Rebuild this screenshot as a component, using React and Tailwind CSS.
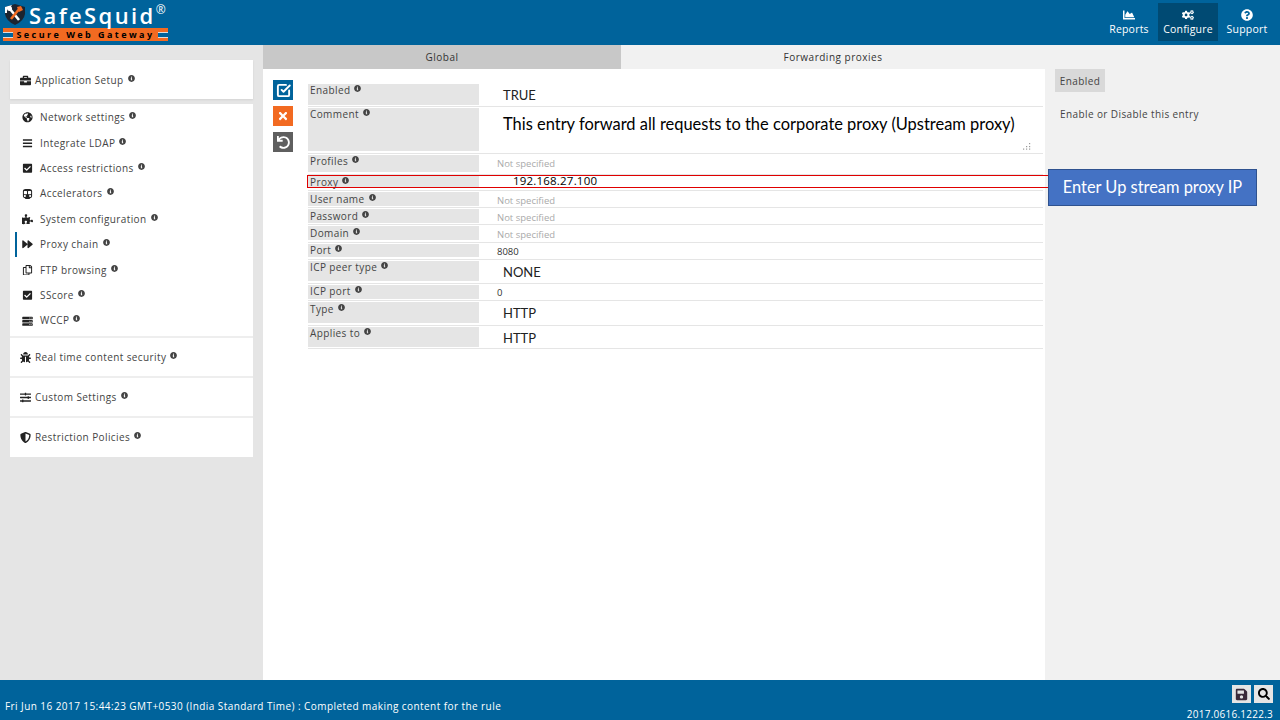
import {
  FaBars, FaBriefcase, FaBug, FaChartArea, FaCheckSquare, FaCogs, FaForward, FaGlobeAmericas,
  FaInfoCircle, FaPuzzlePiece, FaQuestionCircle, FaRegCopy, FaSave,
  FaSearch, FaServer, FaShieldAlt, FaSlidersH, FaSubway, FaTimes, FaUndo,
} from 'react-icons/fa';
import { FiCheckSquare } from 'react-icons/fi';

const ui = { fontFamily: '"Open Sans", sans-serif' };
const big = { fontFamily: 'Lato, sans-serif' };

const menuItems = [
  { label: 'Network settings', icon: FaGlobeAmericas },
  { label: 'Integrate LDAP', icon: FaBars },
  { label: 'Access restrictions', icon: FaCheckSquare },
  { label: 'Accelerators', icon: FaSubway },
  { label: 'System configuration', icon: FaPuzzlePiece },
  { label: 'Proxy chain', icon: FaForward, active: true },
  { label: 'FTP browsing', icon: FaRegCopy },
  { label: 'SScore', icon: FaCheckSquare },
  { label: 'WCCP', icon: FaServer },
];

// heights: row box plus the 1px gap under its line, grey label block inside
const rows = [
  { label: 'Enabled', value: 'TRUE', kind: 'big', h: 'h-[23px]', grey: 'h-[21px]' },
  { label: 'Comment', kind: 'comment', h: 'h-[46px]', grey: 'h-[43px]' },
  { label: 'Profiles', value: 'Not specified', kind: 'empty', h: 'h-[20px]', grey: 'h-[17px]' },
  { label: 'Proxy', value: '192.168.27.100', kind: 'proxy', h: 'h-[15px]', grey: 'h-[11px]' },
  { label: 'User name', value: 'Not specified', kind: 'empty', h: 'h-[16px]', grey: 'h-[14px] pt-[1px]' },
  { label: 'Password', value: 'Not specified', kind: 'empty', h: 'h-[16px]', grey: 'h-[14px] pt-[1px]' },
  { label: 'Domain', value: 'Not specified', kind: 'empty', h: 'h-[17px]', grey: 'h-[14px] pt-[1px]' },
  { label: 'Port', value: '8080', kind: 'plain', h: 'h-[16px]', grey: 'h-[13px]' },
  { label: 'ICP peer type', value: 'NONE', kind: 'big', h: 'h-[23px]', grey: 'h-[20px]' },
  { label: 'ICP port', value: '0', kind: 'plain', h: 'h-[16px]', grey: 'h-[14px]' },
  { label: 'Type', value: 'HTTP', kind: 'big', h: 'h-[24px]', grey: 'h-[21px] pt-[1px]' },
  { label: 'Applies to', value: 'HTTP', kind: 'big', h: 'h-[22px]', grey: 'h-[20px]' },
];

function Info({ className = '' }) {
  return <FaInfoCircle className={`inline-block text-[7px] text-[#444] align-top ml-[4px] mt-[1px] ${className}`} />;
}

function Logo() {
  return (
    <div className="w-[172px] pl-[3px] pt-[1px] shrink-0">
      <div className="flex items-start h-[27px]">
        <svg width="22" height="21" viewBox="0 0 22 21" className="ml-[1px] mt-[3px] shrink-0">
          <path d="M1 3 L11 0 L21 3 L21 10 Q20 17 11 21 Q2 17 1 10 Z" fill="#1c2430" />
          <path d="M1 3 L8 1 L6 4 L3 5 L3 9 L1 9 Z" fill="#fff" />
          <path d="M6 5 L15 16" stroke="#fff" strokeWidth="2.6" />
          <path d="M16 4 L7 15" stroke="#f26a21" strokeWidth="2.6" />
          <path d="M13 3 L17 2 L19 6 L15 8 Z" fill="#f26a21" />
          <circle cx="5.5" cy="4.5" r="2.5" fill="#fff" />
        </svg>
        <span className="text-[22px] leading-[24px] font-semibold text-white tracking-[2.4px] ml-[3px] mt-[2px]" style={ui}>
          SafeSquid
        </span>
        <span className="text-[12px] leading-[12px] text-white mt-[3px]" style={ui}>®</span>
      </div>
      <div className="flex items-center justify-between bg-[#f26a21] h-[13px] w-[165px]">
        <span className="w-[10px] border-y border-[#ddd] h-[6px] bg-[#00639b]" />
        <span className="text-[9px] leading-[13px] font-bold text-black tracking-[2.45px]" style={ui}>Secure Web Gateway</span>
        <span className="w-[10px] border-y border-[#ddd] h-[6px] bg-[#00639b]" />
      </div>
    </div>
  );
}

function TopButton({ icon: Icon, label, className }) {
  return (
    <div className={`flex flex-col items-center justify-center h-[38px] ${className}`}>
      <Icon className="text-[12px] text-white" />
      <span className="text-[10.5px] leading-[13px] text-white tracking-[0.2px] mt-[2px]">{label}</span>
    </div>
  );
}

function SectionCard({ icon: Icon, label, className }) {
  return (
    <div className={`bg-white flex items-center pl-[10px] ${className}`}>
      <Icon className="text-[11px] text-[#222] w-[11px] shrink-0" />
      <span className="text-[10px] text-[#444] tracking-[0.4px] ml-[4px]">{label}</span>
      <Info className="mb-[5px]" />
    </div>
  );
}

function Sidebar() {
  return (
    <aside className="w-[263px] shrink-0 bg-[#e5e5e5] pl-[10px] pr-[10px] pt-[15px]">
      <SectionCard icon={FaBriefcase} label="Application Setup" className="h-[39px] mb-[5px] pt-[2px] shadow-[0_1px_2px_rgba(0,0,0,0.08)]" />
      <div className="bg-white h-[234px] pt-[1px] border-b-2 border-[#eeeeee]">
        {menuItems.map((item) => (
          <div key={item.label} className="flex items-center h-[25.4px] pl-[5px]">
            <span className={`w-[2px] h-[25px] ${item.active ? 'bg-[#00639b]' : ''}`} />
            <item.icon className="text-[10.5px] text-[#222] w-[11px] ml-[5px] shrink-0" />
            <span className="text-[10px] text-[#444] tracking-[0.4px] ml-[7px]">{item.label}</span>
            <Info className="mb-[5px]" />
          </div>
        ))}
      </div>
      <SectionCard icon={FaBug} label="Real time content security" className="h-[40px] border-b-2 border-[#eeeeee]" />
      <SectionCard icon={FaSlidersH} label="Custom Settings" className="h-[40px] border-b-2 border-[#eeeeee]" />
      <SectionCard icon={FaShieldAlt} label="Restriction Policies" className="h-[39px]" />
    </aside>
  );
}

function ActionButton({ icon: Icon, className, iconClass }) {
  return (
    <div className={`w-[20px] h-[20px] flex items-center justify-center ${className}`}>
      <Icon className={`text-white ${iconClass}`} />
    </div>
  );
}

function ResizeGrip() {
  return (
    <svg width="8" height="7" viewBox="0 0 8 7" className="absolute right-[12px] bottom-[3px]" fill="#999">
      <rect x="6" y="0" width="1.2" height="1.2" />
      <rect x="3" y="3" width="1.2" height="1.2" />
      <rect x="6" y="3" width="1.2" height="1.2" />
      <rect x="0" y="5.5" width="1.2" height="1.2" />
      <rect x="3" y="5.5" width="1.2" height="1.2" />
      <rect x="6" y="5.5" width="1.2" height="1.2" />
    </svg>
  );
}

function Value({ row }) {
  if (row.kind === 'big') {
    return <div className="pl-[24px] pt-[2px] text-[13px] leading-[18px] text-[#222]" style={big}>{row.value}</div>;
  }
  if (row.kind === 'comment') {
    return (
      <div className="relative h-full pl-[24px] pt-[5px] text-[16.45px] leading-[22px] text-black" style={big}>
        This entry forward all requests to the corporate proxy (Upstream proxy)
        <ResizeGrip />
      </div>
    );
  }
  if (row.kind === 'proxy') {
    return <div className="pl-[34px] -mt-[2px] text-[11.5px] leading-[14px] text-black tracking-[0.2px]">{row.value}</div>;
  }
  if (row.kind === 'empty') {
    return <div className="pl-[18px] pt-[2px] text-[9.5px] leading-[14px] text-[#aaa]">{row.value}</div>;
  }
  return <div className="pl-[18px] pt-[1px] text-[9.5px] leading-[14px] text-[#333]">{row.value}</div>;
}

function Form() {
  return (
    <div className="relative mt-[15px] ml-[15px] w-[735px]">
      {rows.map((row) => (
        <div key={row.label} className={`flex border-b border-[#e5e5e5] mb-[1px] ${row.h}`}>
          <div className={`w-[171px] shrink-0 bg-[#e5e5e5] pl-[2px] text-[10px] leading-[13px] text-[#444] tracking-[0.4px] ${row.grey}`}>
            {row.label}
            <Info />
          </div>
          <div className="flex-1 min-w-0">
            <Value row={row} />
          </div>
        </div>
      ))}
      <div className="absolute -left-px top-[91px] w-[742px] h-[13px] border border-[#e00000]" />
    </div>
  );
}

export default function App() {
  return (
    <div className="w-[1280px] h-[720px] flex flex-col overflow-hidden" style={ui}>
      <header className="h-[45px] bg-[#00639b] flex items-start justify-between shrink-0">
        <Logo />
        <div className="flex pt-[3px] pr-[4px]">
          <TopButton icon={FaChartArea} label="Reports" className="w-[58px]" />
          <TopButton icon={FaCogs} label="Configure" className="w-[60px] bg-[#004a73]" />
          <TopButton icon={FaQuestionCircle} label="Support" className="w-[58px]" />
        </div>
      </header>

      <div className="flex flex-1 min-h-0">
        <Sidebar />

        <main className="flex-1 flex flex-col min-w-0 bg-[#f1f1f1]">
          <div className="flex h-[24px] shrink-0 text-[10px] text-[#333] tracking-[0.5px]">
            <div className="w-[358px] bg-[#c8c8c8] flex items-center justify-center pt-[1px]">Global</div>
            <div className="w-[424px] flex items-center justify-center pt-[1px]">Forwarding proxies</div>
          </div>
          <div className="flex flex-1 min-h-0">
            <div className="w-[782px] bg-white flex shrink-0 pl-[10px]">
              <div className="flex flex-col gap-[6px] pt-[11px] w-[20px] shrink-0">
                <ActionButton icon={FiCheckSquare} className="bg-[#00639b]" iconClass="text-[15px] stroke-[3px]" />
                <ActionButton icon={FaTimes} className="bg-[#f26a21]" iconClass="text-[12px]" />
                <ActionButton icon={FaUndo} className="bg-[#5f5f5f]" iconClass="text-[13px]" />
              </div>
              <Form />
            </div>
            <div className="relative flex-1 pl-[10px]">
              <div className="w-[50px] h-[23px] pt-[1px] bg-[#d9d9d9] flex items-center justify-center text-[10px] text-[#444] tracking-[0.4px]">
                Enabled
              </div>
              <div className="mt-[15px] pl-[5px] text-[10px] leading-[14px] text-[#444] tracking-[0.4px]">
                Enable or Disable this entry
              </div>
              <div
                className="absolute left-[3px] top-[100px] w-[209px] h-[37px] bg-[#4472c4] border border-[#2f528f] flex items-center justify-center text-[16.4px] text-white"
                style={big}
              >
                Enter Up stream proxy IP
              </div>
            </div>
          </div>
        </main>
      </div>

      <footer className="h-[40px] bg-[#00639b] flex justify-between shrink-0 pl-[5px] pr-[7px]">
        <div className="text-[10px] leading-[14px] text-white tracking-[0.43px] pt-[19px]">
          Fri Jun 16 2017 15:44:23 GMT+0530 (India Standard Time) : Completed making content for the rule
        </div>
        <div className="flex flex-col items-end pt-[5px]">
          <div className="flex gap-[3px]">
            <div className="w-[19px] h-[18px] bg-[#e5e5e5] flex items-center justify-center">
              <FaSave className="text-[13px] text-[#3a2a3a]" />
            </div>
            <div className="w-[19px] h-[18px] bg-[#e5e5e5] flex items-center justify-center">
              <FaSearch className="text-[12px] text-black" />
            </div>
          </div>
          <div className="text-[10px] leading-[12px] text-white tracking-[0.25px] mt-[5px]">2017.0616.1222.3</div>
        </div>
      </footer>
    </div>
  );
}
